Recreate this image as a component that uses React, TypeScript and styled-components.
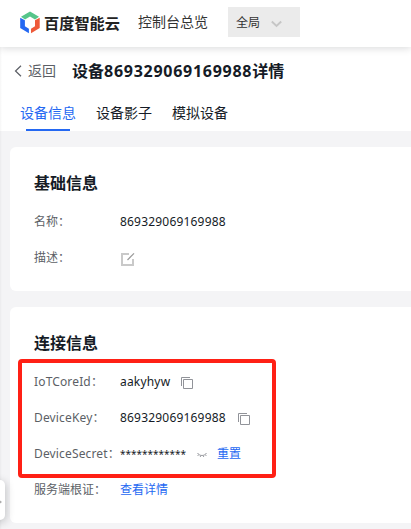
import React from "react";
import styled, { createGlobalStyle } from "styled-components";

const GlobalStyle = createGlobalStyle`
  * { box-sizing: border-box; }
  body {
    margin: 0;
    background: #f4f4f6;
    color: #151b26;
    font-family: "Noto Sans", "Noto Sans CJK SC", sans-serif;
    font-size: 12px;
    overflow: hidden;
  }
`;

const Page = styled.div`
  position: relative;
  width: 411px;
  height: 529px;
  overflow: hidden;
`;

const TopBar = styled.header`
  position: relative;
  z-index: 1;
  display: flex;
  align-items: center;
  height: 47px;
  padding: 0 0 3px 20px;
  background: #fff;
  box-shadow: 0 1px 8px rgba(7, 12, 20, 0.16);
`;

const Brand = styled.span`
  width: 76px;
  margin-left: 4px;
  font-family: "Noto Sans CJK SC", sans-serif;
  font-size: 15.2px;
  font-weight: 700;
  line-height: 20px;
  color: #222;
  white-space: nowrap;
`;

const Overview = styled.span`
  margin-left: 18px;
  width: 70px;
  font-size: 14px;
  line-height: 20px;
  color: #333;
  white-space: nowrap;
`;

const Region = styled.button`
  display: flex;
  align-items: center;
  width: 72px;
  height: 30px;
  margin-left: 20px;
  padding: 0 0 0 8px;
  gap: 11px;
  border: 0;
  background: #ebebeb;
  color: #333;
  font: inherit;

  svg {
    margin-top: 3px;
  }
`;

const Heading = styled.section`
  height: 84px;
  background: #fff;
`;

const TitleRow = styled.div`
  display: flex;
  align-items: center;
  height: 48px;
  padding-left: 14px;
`;

const Back = styled.a`
  display: flex;
  align-items: center;
  gap: 6px;
  width: 58px;
  font-size: 14px;
  line-height: 20px;
  color: #5c5f66;
`;

const Title = styled.h1`
  margin: 0;
  font-size: 16px;
  font-weight: 700;
  line-height: 24px;
  white-space: nowrap;
`;

const Digits = styled.span<{ $spacing: number }>`
  letter-spacing: ${(p) => p.$spacing}px;
`;

const Tabs = styled.nav`
  display: flex;
  gap: 20px;
  height: 36px;
  padding-left: 20px;
`;

const Tab = styled.a<{ $active?: boolean }>`
  display: flex;
  flex-direction: column;
  align-items: center;
  justify-content: space-between;
  width: 56px;
  padding-top: 8px;
  font-size: 14px;
  line-height: 20px;
  white-space: nowrap;
  color: ${(p) => (p.$active ? "#2468f2" : "#151b26")};

  &::after {
    content: "";
    width: 44px;
    height: 2px;
    background: ${(p) => (p.$active ? "#2468f2" : "transparent")};
  }
`;

const Content = styled.main`
  display: flex;
  flex-direction: column;
  gap: 16px;
  padding: 16px 0 0 10px;
`;

const Card = styled.section<{ $height: number }>`
  height: ${(p) => p.$height}px;
  padding: 24px 0 0 24px;
  border-radius: 6px 0 0 6px;
  background: #fff;
`;

const CardTitle = styled.h2`
  margin: 0 0 9px;
  font-size: 16px;
  font-weight: 600;
  line-height: 24px;
`;

const Field = styled.div`
  display: flex;
  align-items: center;
  height: 36px;
  line-height: 20px;

  svg {
    margin-top: 2px;
  }
`;

const Label = styled.span<{ $spacing?: number }>`
  width: 86px;
  color: #5c5f66;
  white-space: nowrap;
  letter-spacing: ${(p) => p.$spacing ?? 0}px;
`;

const Value = styled.span<{ $width?: number }>`
  width: ${(p) => (p.$width ? `${p.$width}px` : "auto")};
  letter-spacing: 0.19px;
  white-space: nowrap;
`;

const Masked = styled.span`
  width: 77px;
  font-size: 10px;
  white-space: nowrap;
`;

const Link = styled.a`
  color: #2468f2;
`;

const ResetLink = styled(Link)`
  margin-left: 10px;
`;

const Highlight = styled.div`
  position: absolute;
  left: 18px;
  top: 359px;
  width: 258px;
  height: 119px;
  border: 4px solid #ff2015;
  border-radius: 4px;
  pointer-events: none;
`;

const Drawer = styled.div`
  position: absolute;
  left: -10px;
  top: 480px;
  display: flex;
  align-items: center;
  justify-content: flex-end;
  width: 15px;
  height: 40px;
  padding: 4px 3px 0 0;
  border-radius: 5px;
  background: #fff;
  box-shadow: 1px 2px 8px rgba(7, 12, 20, 0.22);
`;

const SideEdge = styled.div`
  position: absolute;
  left: 0;
  top: 47px;
  bottom: 0;
  width: 2px;
  background: linear-gradient(to right, rgba(7, 12, 20, 0.04), transparent);
`;

const Logo = () => (
  <svg width="20" height="23" viewBox="0 0 20 23">
    <path d="M1 5.700 10 .4l9 5.300-4 2.800L10 5.500 5 8.500z" fill="#55c58a" />
    <path d="M.2 6.700 4.900 9.300v5.900l4 2.600v4.500L.2 17z" fill="#2468f2" />
    <path d="M19.700 6.700 15 9.300v5.900l-4 2.600v4.500l8.700-5.300z" fill="#ee5a3a" />
  </svg>
);

const CopyIcon = () => (
  <svg width="13" height="13" viewBox="0 0 13 13" fill="none" stroke="#919399">
    <path d="M.5 9V.5H9" />
    <path d="M2.500 2.500h9v9h-9z" />
  </svg>
);

const EditIcon = () => (
  <svg width="15" height="15" viewBox="0 0 15 15" fill="none">
    <path d="M9 2H2v11h11V7" stroke="#c9c9c9" strokeWidth="2" />
    <path d="m7.500 8 6.500-6.700" stroke="#999" strokeWidth="1.200" />
  </svg>
);

const ClosedEyeIcon = () => (
  <svg width="10" height="6" viewBox="0 0 10 6" fill="none" stroke="#919399">
    <path d="M.5 1C2.500 4.300 7.500 4.300 9.500 1M1.700 2.500.700 4M3.700 3.500 3.300 5M6.300 3.500l.4 1.500M8.300 2.500l1 1.500" strokeWidth=".9" />
  </svg>
);

export default function App() {
  return (
    <Page>
      <GlobalStyle />
      <TopBar>
        <Logo />
        <Brand>百度智能云</Brand>
        <Overview>控制台总览</Overview>
        <Region>
          全局
          <svg width="11" height="8" viewBox="0 0 11 8" fill="none">
            <path d="m.8 1.500 4.700 4.500L10.200 1.500" stroke="#c6c6c6" strokeWidth="1.900" />
          </svg>
        </Region>
      </TopBar>
      <Heading>
        <TitleRow>
          <Back>
            <svg width="8" height="12" viewBox="0 0 8 12" fill="none">
              <path d="M7 .7 1.500 6 7 11.300" stroke="#5c5f66" strokeWidth="1.200" />
            </svg>
            返回
          </Back>
          <Title>
            设备<Digits $spacing={0.73}>869329069169988</Digits>详情
          </Title>
        </TitleRow>
        <Tabs>
          <Tab $active>设备信息</Tab>
          <Tab>设备影子</Tab>
          <Tab>模拟设备</Tab>
        </Tabs>
      </Heading>
      <Content>
        <Card $height={144}>
          <CardTitle>基础信息</CardTitle>
          <Field>
            <Label>名称：</Label>
            <Value>869329069169988</Value>
          </Field>
          <Field>
            <Label>描述：</Label>
            <EditIcon />
          </Field>
        </Card>
        <Card $height={216}>
          <CardTitle>连接信息</CardTitle>
          <Field>
            <Label $spacing={0.15}>IoTCoreId：</Label>
            <Value $width={61}>aakyhyw</Value>
            <CopyIcon />
          </Field>
          <Field>
            <Label $spacing={0.15}>DeviceKey：</Label>
            <Value $width={118}>869329069169988</Value>
            <CopyIcon />
          </Field>
          <Field>
            <Label $spacing={0.15}>DeviceSecret：</Label>
            <Masked>************</Masked>
            <ClosedEyeIcon />
            <ResetLink>重置</ResetLink>
          </Field>
          <Field>
            <Label>服务端根证：</Label>
            <Link>查看详情</Link>
          </Field>
        </Card>
      </Content>
      <SideEdge />
      <Highlight />
      <Drawer>
        <svg width="4" height="6" viewBox="0 0 4 6">
          <path d="m0 0 4 3-4 3z" fill="#aaa" />
        </svg>
      </Drawer>
    </Page>
  );
}
